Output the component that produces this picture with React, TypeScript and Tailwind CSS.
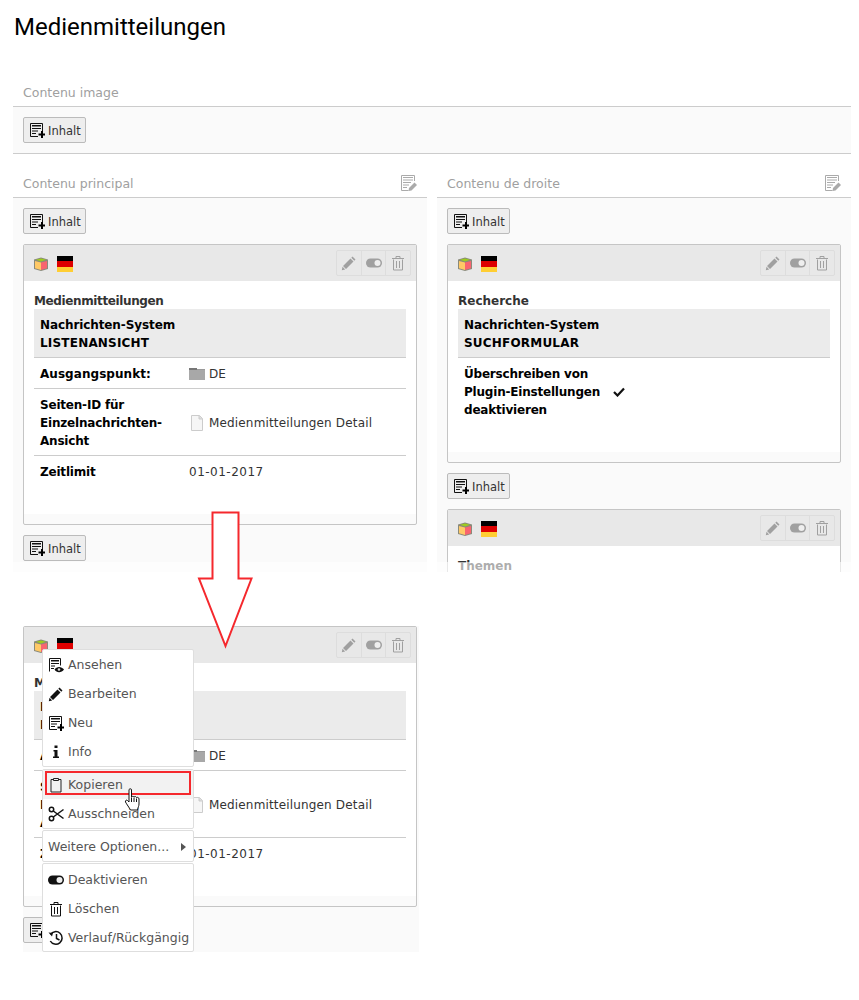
const FONT = "font-['DejaVu_Sans',Verdana,sans-serif]";

function IconNew({ className = "" }: { className?: string }) {
  return (
    <svg width="16" height="16" viewBox="0 0 16 16" className={className}>
      <path d="M1.500 1.500h12V9M9 14.500H1.500v-13" fill="none" stroke="#111" strokeWidth="1" />
      <path d="M3 3h9v1.500H3zM3 6h9v1H3zM3 8.500h6v1H3zM3 11h4v1H3z" fill="#111" />
      <path d="M12 9h2v2.500h2.500v2H14V16h-2v-2.500H9.500v-2H12z" fill="#000" />
    </svg>
  );
}

function Btn() {
  return (
    <div className="flex h-[26px] w-[63px] shrink-0 items-center rounded-[2px] border border-[#bbbbbb] bg-[#eeeeee] pl-[5px]">
      <IconNew />
      <span className="ml-[3px] pt-[2px] text-[11.500px] text-[#333]">Inhalt</span>
    </div>
  );
}

function Cube() {
  return (
    <svg width="16" height="16" viewBox="0 0 16 16">
      <path d="M1 3.500 8 1.500l7 2v9.500l-7 2-7-2z" fill="#8a8a7a" />
      <path d="M2 5l6 1.500v7.500l-6-1.700z" fill="#ffc966" />
      <path d="M14 5l-6 1.500v7.500l6-1.700z" fill="#f9646f" />
      <path d="M3 3.800 8 2.500l5 1.300-5 1.600z" fill="#9ccc1e" />
    </svg>
  );
}

function Flag() {
  return (
    <div className="flex h-4 w-4 flex-col">
      <div className="h-[5px] bg-black" />
      <div className="h-[6px] bg-[#dd0000]" />
      <div className="h-[5px] bg-[#ffce33]" />
    </div>
  );
}

function Pencil({ color = "#a0a0a0" }: { color?: string }) {
  return (
    <svg width="16" height="16" viewBox="0 0 16 16">
      <path d="M11.500 1.500 14.500 4.500 13.300 5.700 10.300 2.700zM9.500 3.500l3 3-7.500 7.500-3-3z" fill={color} />
      <path d="M1.500 11.800 4.200 14.500.8 15.200z" fill={color} />
    </svg>
  );
}

function Toggle({ color = "#a0a0a0" }: { color?: string }) {
  return (
    <svg width="16" height="16" viewBox="0 0 16 16">
      <rect x="0" y="3.500" width="16" height="9" rx="4.500" fill={color} />
      <circle cx="11.500" cy="8" r="3" fill="#eeeeee" />
    </svg>
  );
}

function Trash({ color = "#a0a0a0" }: { color?: string }) {
  return (
    <svg width="16" height="16" viewBox="0 0 16 16" fill="none" stroke={color} strokeWidth="1">
      <path d="M3.500 4.500v10.500h9V4.500M2 3.500h12M6 3.500V1.500h4v2M6.500 6v7M9.500 6v7" />
    </svg>
  );
}

function EditColumn() {
  return (
    <svg width="16" height="16" viewBox="0 0 16 16">
      <path d="M13.500 6V.500H.500v15h7" fill="none" stroke="#aaa" />
      <path d="M2 2.500h10M2 5h10M2 7.500h8M2 10h6M2 12.500h4" stroke="#aaa" />
      <path d="M13.500 7.500l2.500 2.500-5.500 5.500-3 .5.500-3z" fill="#aaa" />
    </svg>
  );
}

function CardHeader() {
  return (
    <div className="flex h-[36px] shrink-0 items-center justify-between bg-[#e8e8e8] pl-[9px] pr-[5px]">
      <div className="mt-[2px] flex items-center gap-[8px]">
        <Cube />
        <Flag />
      </div>
      <div className="flex h-[26px] w-[75px] rounded-[2px] border border-[#dddddd]">
        <div className="flex flex-1 items-center justify-center"><Pencil /></div>
        <div className="flex flex-1 items-center justify-center border-x border-[#dddddd]"><Toggle /></div>
        <div className="flex flex-1 items-center justify-center"><Trash /></div>
      </div>
    </div>
  );
}

function Row({ label, children, last }: { label: React.ReactNode; children: React.ReactNode; last?: boolean }) {
  return (
    <div className={`flex items-center pb-[5px] pt-[7px] ${last ? "" : "border-b border-[#cccccc]"}`}>
      <div className="w-[155px] shrink-0 whitespace-nowrap pl-[6px] font-bold tracking-[-0.2px] text-black">{label}</div>
      <div className="flex items-center text-[#333]">{children}</div>
    </div>
  );
}

function Folder() {
  return (
    <svg width="16" height="16" viewBox="0 0 16 16" className="mr-[4px]">
      <path d="M0 2h8v2H0z" fill="#777" />
      <path d="M8 3h8v1H8z" fill="#999" />
      <path d="M0 4h16v10H0z" fill="#a8a8a8" />
    </svg>
  );
}

function PageIcon() {
  return (
    <svg width="16" height="16" viewBox="0 0 16 16" className="mr-[4px]">
      <path d="M2.500.500h8l3 3v12h-11z" fill="#f6f6f6" stroke="#cccccc" />
      <path d="M10 .500v3.500h3.500" fill="#dddddd" stroke="#cccccc" />
    </svg>
  );
}

function Block({ line1, line2 }: { line1: string; line2: string }) {
  return (
    <div className="border-b border-[#cccccc] bg-[#ebebeb] px-[6px] pb-[5px] pt-[7px] font-bold text-black">
      <div className="tracking-[-0.1px]">{line1}</div>
      <div className="tracking-[0.2px]">{line2}</div>
    </div>
  );
}

function NewsCard() {
  return (
    <div className="shrink-0 overflow-hidden rounded-[2px] border border-[#c5c5c5] bg-[#fafafa]">
      <CardHeader />
      <div className="bg-white px-[10px] pb-[28px] pt-[10px]">
        <div className="h-[18px] pt-[1px] font-bold tracking-[-0.38px] text-[#333]">Medienmitteilungen</div>
        <Block line1="Nachrichten-System" line2="LISTENANSICHT" />
        <Row label={<span className="tracking-[0.05px]">Ausgangspunkt:</span>}><Folder />DE</Row>
        <Row label={<>Seiten-ID für<br />Einzelnachrichten-<br />Ansicht</>}><PageIcon /><span className="tracking-[0.16px]">Medienmitteilungen Detail</span></Row>
        <Row label="Zeitlimit" last><span className="tracking-[0.5px]">01-01-2017</span></Row>
      </div>
      <div className="h-[10px]" />
    </div>
  );
}

function SearchCard() {
  return (
    <div className="shrink-0 overflow-hidden rounded-[2px] border border-[#c5c5c5] bg-[#fafafa]">
      <CardHeader />
      <div className="bg-white px-[10px] pb-[28px] pt-[10px]">
        <div className="h-[18px] pt-[1px] font-bold text-[#333]">Recherche</div>
        <Block line1="Nachrichten-System" line2="SUCHFORMULAR" />
        <Row label={<>Überschreiben von<br />Plugin-Einstellungen<br />deaktivieren</>} last>
          <svg width="12" height="10" viewBox="0 0 12 10"><path d="M1 5l3.500 3.500L11 1.500" fill="none" stroke="#111" strokeWidth="2.200" /></svg>
        </Row>
      </div>
      <div className="h-[10px]" />
    </div>
  );
}

function ColumnHeader({ title, edit }: { title: string; edit?: boolean }) {
  return (
    <div className="flex h-[29px] shrink-0 items-center justify-between border-b border-[#cccccc] px-[10px]">
      <span className="pt-[2px] text-[12.500px] text-[#a0a0a0]">{title}</span>
      {edit && <EditColumn />}
    </div>
  );
}

function MenuItem({ icon, label }: { icon?: React.ReactNode; label: string }) {
  return (
    <div className="flex h-[29px] items-center pl-[5px] text-[#555]">
      <span className="flex w-[16px] items-center justify-center">{icon}</span>
      <span className="ml-[4px] whitespace-nowrap">{label}</span>
    </div>
  );
}

function ContextMenu() {
  const group = "rounded-[2px] border border-[#dedede] bg-white";
  return (
    <div className="absolute left-[19px] top-[23px] w-[152px] text-[12.500px]">
      <div className={group}>
        <MenuItem label="Ansehen" icon={
          <svg width="16" height="16" viewBox="0 0 16 16">
            <path d="M1.500 14.500v-13h11v7" fill="none" stroke="#111" />
            <path d="M3 3h8v1.500H3zM3 6h8v1H3zM3 8.500h4v1H3zM3 11h3v1H3z" fill="#111" />
            <path d="M6.500 12.500c2-3.500 7-3.500 9.500 0-2.500 3.500-7.500 3.500-9.500 0z" fill="#111" />
            <circle cx="11" cy="12.500" r="1.300" fill="#ddd" />
          </svg>
        } />
        <MenuItem label="Bearbeiten" icon={<Pencil color="#111" />} />
        <MenuItem label="Neu" icon={<IconNew />} />
        <MenuItem label="Info" icon={
          <svg width="16" height="16" viewBox="0 0 16 16"><path d="M6.500 1.500h3v2.500h-3zM5.500 6h4v6.500h1.500V14H5v-1.500h1.500V7.500h-1z" fill="#111" /></svg>
        } />
      </div>
      <div className={`${group} mt-[2px] h-[60px]`}>
        <div className="bg-[#f2f2f2]">
          <MenuItem label="Kopieren" icon={
            <svg width="16" height="16" viewBox="0 0 16 16" fill="none" stroke="#222"><path d="M5.500 2.500h-2.500v12.500h10V2.500h-2.500" /><path d="M5.500 1.500h5v2h-5z" /></svg>
          } />
        </div>
        <MenuItem label="Ausschneiden" icon={
          <svg width="16" height="16" viewBox="0 0 16 16" fill="none" stroke="#111" strokeWidth="1.500"><circle cx="3.500" cy="3.500" r="2.200" /><circle cx="3.500" cy="12.500" r="2.200" /><path d="M5.300 5 15.500 12.500M5.300 11 15.500 3.500" /></svg>
        } />
      </div>
      <div className={`${group} mt-[1px] flex h-[32px] items-center justify-between pl-[5px] pr-[7px] pt-[1px] text-[#555]`}>
        <span className="whitespace-nowrap">Weitere Optionen...</span>
        <svg width="5" height="8" viewBox="0 0 5 8"><path d="M0 0l5 4-5 4z" fill="#555" /></svg>
      </div>
      <div className={`${group} mt-[1px] h-[89px] pt-[1px]`}>
        <MenuItem label="Deaktivieren" icon={<Toggle color="#111" />} />
        <MenuItem label="Löschen" icon={<Trash color="#111" />} />
        <MenuItem label="Verlauf/Rückgängig" icon={
          <svg width="16" height="16" viewBox="0 0 16 16" fill="none" stroke="#111" strokeWidth="1.500"><path d="M2.500 4.500A6.300 6.300 0 1 1 2.300 11" /><path d="M8.500 4v4.500l3 1.500" /><path d="M.5 2.500l4.500.5-1 3.500z" fill="#111" stroke="none" /></svg>
        } />
      </div>
      <div className="absolute left-[3px] top-[122px] h-[24px] w-[146px] border-2 border-[#f5282d]" />
      <svg width="18" height="24" viewBox="0 0 18 24" className="absolute left-[82px] top-[139px]">
        <path d="M5 1.500c1-1 2.500-1 2.500.5v7c1-1 2-.8 2.500 0 1-.8 2-.5 2.500.5 1-.5 2.500 0 2.500 1.500v5c0 2-1 3-1.500 6H6.500c-1-2-4-6-5-8-.5-1.500 1-2.500 2-1.500l1.500 1.500z" fill="#fff" stroke="#111" />
        <path d="M7.500 9.500v4.500M10 9.500v4.500M12.500 10.500v3.500" stroke="#111" />
      </svg>
    </div>
  );
}

export default function App() {
  return (
    <div className={`relative h-[1000px] w-[859px] overflow-hidden bg-white text-[12px] leading-[18px] ${FONT}`}>
      <h1 className="h-[78px] pl-[14px] pt-[10px] font-['Roboto',sans-serif] text-[24px] leading-[34px] text-black">Medienmitteilungen</h1>

      <div className="ml-[13px] w-[838px]">
        <ColumnHeader title="Contenu image" />
        <div className="h-[47px] border-b border-[#cccccc] bg-[#fafafa] p-[10px]">
          <Btn />
        </div>
      </div>

      <div className="relative ml-[13px] mt-[15px] flex h-[403px] w-[838px] gap-[10px] overflow-hidden">
        <div className="flex w-[414px] shrink-0 flex-col">
          <ColumnHeader title="Contenu principal" edit />
          <div className="flex min-h-0 flex-1 flex-col gap-[10px] bg-[#fafafa] p-[10px]">
            <Btn />
            <NewsCard />
            <Btn />
          </div>
        </div>
        <div className="flex w-[414px] shrink-0 flex-col">
          <ColumnHeader title="Contenu de droite" edit />
          <div className="flex min-h-0 flex-1 flex-col gap-[10px] bg-[#fafafa] p-[10px]">
            <Btn />
            <SearchCard />
            <Btn />
            <div className="shrink-0 overflow-hidden rounded-[2px] border border-[#c5c5c5] bg-white">
              <CardHeader />
              <div className="px-[10px] pb-[10px] pt-[11px] font-bold text-[#333]">Themen</div>
            </div>
          </div>
        </div>
        <div className="absolute inset-x-0 bottom-0 h-[10px] bg-white/60" />
      </div>

      <div className="relative ml-[23px] mt-[54px] w-[396px] bg-[#fafafa] pb-[9px] pr-[2px]">
        <NewsCard />
        <div className="mt-[10px]"><Btn /></div>
        <ContextMenu />
      </div>

      <svg width="58" height="140" viewBox="0 0 58 140" className="absolute left-[196px] top-[510px]">
        <path d="M16.500 2.500h26v66h13L29.500 136 3 68.500h13.500z" fill="#fff" stroke="#f5282d" strokeWidth="2" />
      </svg>
    </div>
  );
}
